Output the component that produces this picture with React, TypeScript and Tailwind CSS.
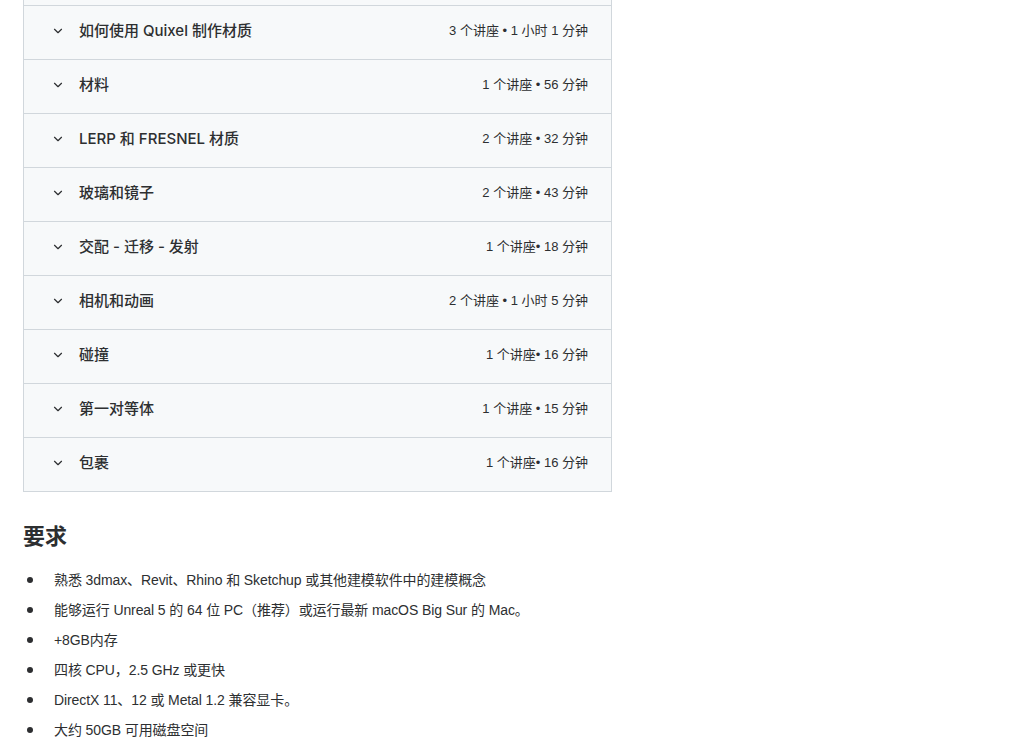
import { ChevronDown } from "lucide-react";

const sections = [
  { title: "如何使用 Quixel 制作材质", meta: "3 个讲座 • 1 小时 1 分钟" },
  { title: "材料", meta: "1 个讲座 • 56 分钟" },
  { title: "LERP 和 FRESNEL 材质", meta: "2 个讲座 • 32 分钟" },
  { title: "玻璃和镜子", meta: "2 个讲座 • 43 分钟" },
  { title: "交配 - 迁移 - 发射", meta: "1 个讲座• 18 分钟" },
  { title: "相机和动画", meta: "2 个讲座 • 1 小时 5 分钟" },
  { title: "碰撞", meta: "1 个讲座• 16 分钟" },
  { title: "第一对等体", meta: "1 个讲座 • 15 分钟" },
  { title: "包裹", meta: "1 个讲座• 16 分钟" },
];

const requirements = [
  "熟悉 3dmax、Revit、Rhino 和 Sketchup 或其他建模软件中的建模概念",
  "能够运行 Unreal 5 的 64 位 PC（推荐）或运行最新 macOS Big Sur 的 Mac。",
  "+8GB内存",
  "四核 CPU，2.5 GHz 或更快",
  "DirectX 11、12 或 Metal 1.2 兼容显卡。",
  "大约 50GB 可用磁盘空间",
];

export default function App() {
  return (
    <div className="min-h-[751px] bg-white text-[#2d2f31] font-['Liberation_Sans','Noto_Sans_CJK_SC',sans-serif]">
      <div className="ml-[23px] w-[589px] border-x border-b border-[#d1d7dc] bg-[#f7f9fa]">
        <div className="h-[5px]" />
        {sections.map((s) => (
          <div
            key={s.title}
            className="flex h-[54px] items-center justify-between border-t border-[#d1d7dc] pl-[27px] pr-[23px]"
          >
            <div className="flex items-center gap-[14px] pb-[3px]">
              <ChevronDown className="h-[14px] w-[14px] text-[#2d2f31]" strokeWidth={2} />
              <span className="font-['Inter','Noto_Sans_CJK_SC',sans-serif] text-[15px] font-medium">
                {s.title}
              </span>
            </div>
            <span className="pb-[3px] text-[13px]">{s.meta}</span>
          </div>
        ))}
      </div>

      <h2 className="ml-[23px] mt-[28px] font-['Inter','Noto_Sans_CJK_SC',sans-serif] text-[22px] font-bold leading-[32px]">
        要求
      </h2>

      <ul className="ml-[27px] mt-[13px] flex flex-col">
        {requirements.map((r) => (
          <li key={r} className="flex h-[30px] items-center">
            <span className="mr-[21px] h-[6px] w-[6px] rounded-full bg-[#2d2f31]" />
            <span className="text-[14px] tracking-[-0.1px]">{r}</span>
          </li>
        ))}
      </ul>
    </div>
  );
}
